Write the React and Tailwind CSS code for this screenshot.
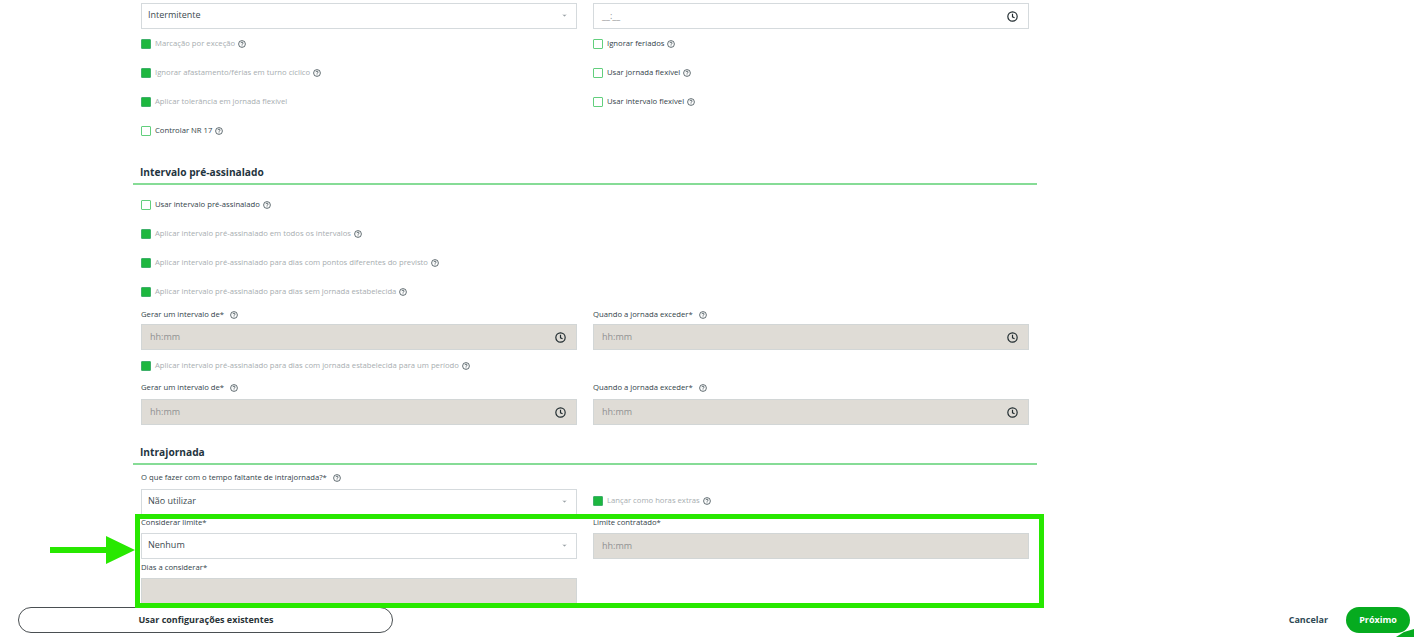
import React from 'react';
import { ChevronDown } from 'lucide-react';

const HelpIcon = ({ className = '' }) => (
    <svg viewBox="0 0 16 16" className={`w-[8px] h-[8px] shrink-0 ${className}`} fill="none" stroke="#24343b" strokeWidth="1.4">
        <circle cx="8" cy="8" r="6.8" />
        <path d="M5.8 6.3c0-1.3 1-2 2.2-2s2.2.8 2.2 1.9c0 1.6-2.2 1.7-2.2 3.3" />
        <path d="M8 11v1.4" />
    </svg>
);

const ClockIcon = () => (
    <svg viewBox="0 0 16 16" className="w-[11px] h-[11px]" fill="none" stroke="#1f2a2e" strokeWidth="1.7">
        <circle cx="8" cy="8" r="6.8" />
        <path d="M8 4v4.4l3 1.4" />
    </svg>
);

const Check = ({ label, checked = false, help = true }) => (
    <div className="flex items-center h-[11px] gap-[3px]">
        <span className={`w-[10px] h-[10px] mr-[1px] shrink-0 rounded-[1px] border ${checked ? 'bg-[#1db73f] border-[#3fb06a]' : 'bg-white border-[#62cf7d]'}`} />
        <span className={`text-[7.7px] leading-none ${checked ? 'text-[#a7adb0]' : 'text-[#33434a]'}`}>{label}</span>
        {help && <HelpIcon />}
    </div>
);

const Label = ({ children, help = false }) => (
    <div className="flex items-center h-[10px] gap-[6px] text-[7.7px] leading-none text-[#33434a]">
        <span>{children}</span>
        {help && <HelpIcon />}
    </div>
);

const SelectBox = ({ value }) => (
    <div className="h-[26px] flex items-center justify-between pl-[6px] pr-[8px] pb-[2px] bg-white border border-[#d5dadd] text-[9px] text-[#3c4a50]">
        <span>{value}</span>
        <ChevronDown className="w-[7px] h-[7px] text-[#9aa2a6]" fill="#9aa2a6" strokeWidth={1} />
    </div>
);

const TimeBox = ({ value = 'hh:mm', disabled = true, clock = true }) => (
    <div className={`h-[26px] flex items-center justify-between pl-[8px] pr-[10px] border text-[9px] ${disabled ? 'bg-[#dfdcd6] border-[#d2d6d6] text-[#8f9192]' : 'bg-white border-[#d5dadd] text-[#8f9192]'}`}>
        <span>{value}</span>
        {clock && <ClockIcon />}
    </div>
);

const Section = ({ title }) => (
    <div className="-mx-[8px] border-b-2 border-[#86dc96] h-[20px]">
        <h2 className="ml-[7px] text-[10.2px] leading-[14px] font-bold text-[#1f3440]">{title}</h2>
    </div>
);

const Row = ({ children, className = '' }) => (
    <div className={`grid grid-cols-[436px_436px] gap-x-[16px] ${className}`}>{children}</div>
);

export default function App() {
    return (
        <div className="relative w-[1414px] h-[637px] overflow-hidden bg-white font-['Open_Sans',sans-serif]">
            <div className="w-[888px] ml-[141px] pt-[3px]">
                <Row>
                    <SelectBox value="Intermitente" />
                    <TimeBox value="__:__" disabled={false} />
                </Row>
                <Row className="mt-[9px]">
                    <div className="flex flex-col gap-[18px]">
                        <Check checked label="Marcação por exceção" />
                        <Check checked label="Ignorar afastamento/férias em turno cíclico" />
                        <Check checked help={false} label="Aplicar tolerância em jornada flexível" />
                        <Check label="Controlar NR 17" />
                    </div>
                    <div className="flex flex-col gap-[18px]">
                        <Check label="Ignorar feriados" />
                        <Check label="Usar jornada flexível" />
                        <Check label="Usar intervalo flexível" />
                    </div>
                </Row>

                <div className="mt-[29px]"><Section title="Intervalo pré-assinalado" /></div>

                <div className="mt-[14px] flex flex-col gap-[18px]">
                    <Check label="Usar intervalo pré-assinalado" />
                    <Check checked label="Aplicar intervalo pré-assinalado em todos os intervalos" />
                    <Check checked label="Aplicar intervalo pré-assinalado para dias com pontos diferentes do previsto" />
                    <Check checked label="Aplicar intervalo pré-assinalado para dias sem jornada estabelecida" />
                </div>

                <Row className="mt-[13px]">
                    <div>
                        <Label help>Gerar um intervalo de*</Label>
                        <div className="mt-[4px]"><TimeBox /></div>
                    </div>
                    <div>
                        <Label help>Quando a jornada exceder*</Label>
                        <div className="mt-[4px]"><TimeBox /></div>
                    </div>
                </Row>

                <div className="mt-[10px]">
                    <Check checked label="Aplicar intervalo pré-assinalado para dias com jornada estabelecida para um período" />
                </div>

                <Row className="mt-[12px]">
                    <div>
                        <Label help>Gerar um intervalo de*</Label>
                        <div className="mt-[6px]"><TimeBox /></div>
                    </div>
                    <div>
                        <Label help>Quando a jornada exceder*</Label>
                        <div className="mt-[6px]"><TimeBox /></div>
                    </div>
                </Row>

                <div className="mt-[20px]"><Section title="Intrajornada" /></div>

                <div className="mt-[8px]">
                    <Label help>O que fazer com o tempo faltante de intrajornada?*</Label>
                </div>
                <Row className="mt-[6px]">
                    <SelectBox value="Não utilizar" />
                    <div className="flex items-center h-[24px]">
                        <Check checked label="Lançar como horas extras" />
                    </div>
                </Row>
                <Row className="mt-[3px]">
                    <div>
                        <Label>Considerar limite*</Label>
                        <div className="mt-[5px]"><SelectBox value="Nenhum" /></div>
                    </div>
                    <div>
                        <Label>Limite contratado*</Label>
                        <div className="mt-[5px]"><TimeBox clock={false} /></div>
                    </div>
                </Row>
                <Row className="mt-[4px]">
                    <div>
                        <Label>Dias a considerar*</Label>
                        <div className="mt-[5px]"><TimeBox value="" clock={false} /></div>
                    </div>
                </Row>
            </div>

            <div className="flex items-center justify-between pl-[18px] pr-[4px] mt-[3px]">
                <button className="w-[375px] h-[26px] rounded-full border border-[#4a4f52] bg-white text-[9px] font-bold text-[#2a3438] pl-[1px]">
                    Usar configurações existentes
                </button>
                <div className="flex items-center gap-[18px]">
                    <span className="text-[9px] font-bold text-[#2f4a55]">Cancelar</span>
                    <button className="w-[64px] h-[26px] rounded-full bg-[#06ab1f] text-[9px] font-bold text-white">Próximo</button>
                </div>
            </div>

            {/* destaque adicionado por cima da tela */}
            <div className="absolute left-[135px] top-[514px] w-[909px] h-[94px] border-[5px] border-[#28e800]" />
            <svg className="absolute left-[50px] top-[536px]" width="85" height="28" viewBox="0 0 85 28">
                <path d="M0 11h56V0l29 14-29 14V17H0z" fill="#28e800" />
            </svg>
            <svg className="absolute left-[1396px] top-[629px]" width="18" height="8" viewBox="0 0 18 8">
                <path d="M0 8 8 3 18 0v8z" fill="#06ab1f" />
            </svg>
        </div>
    );
}
